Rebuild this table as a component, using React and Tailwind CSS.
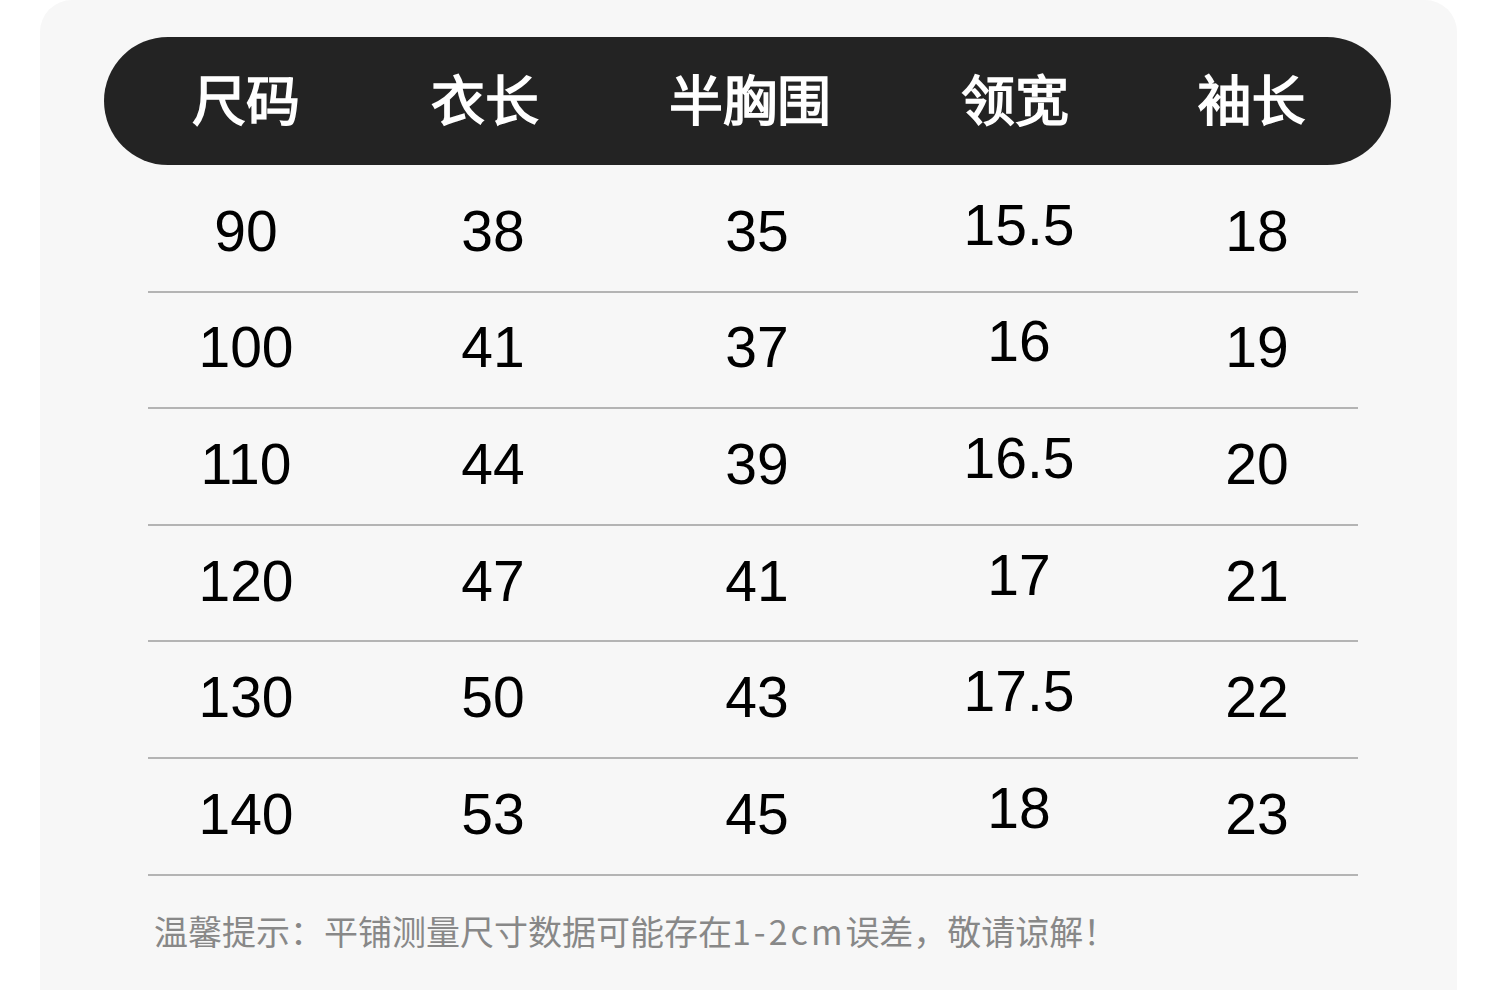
import React from "react";

const cjk = { fontFamily: '"Noto Sans CJK SC", "Noto Sans", sans-serif' };
const num = { fontFamily: '"Liberation Sans", Arial, sans-serif' };

const headers = ["尺码", "衣长", "半胸围", "领宽", "袖长"];
const rows = [
  ["90", "38", "35", "15.5", "18"],
  ["100", "41", "37", "16", "19"],
  ["110", "44", "39", "16.5", "20"],
  ["120", "47", "41", "17", "21"],
  ["130", "50", "43", "17.5", "22"],
  ["140", "53", "45", "18", "23"],
];

export default function App() {
  return (
    <div className="w-[1500px] h-[990px] bg-white overflow-hidden">
      <div className="ml-[40px] w-[1417px] h-[990px] bg-[#f7f7f7] rounded-t-[32px] pt-[37px]">
        <div
          className="ml-[64px] w-[1287px] h-[128px] rounded-full bg-[#232323] grid grid-cols-[284px_194px_336px_194px_279px] items-center text-white text-[54px] leading-none font-normal [-webkit-text-stroke:1.6px_white]"
          style={cjk}
        >
          {headers.map((h) => (
            <div key={h} className="text-center -translate-y-[3px]">
              {h}
            </div>
          ))}
        </div>
        <div className="ml-[108px] w-[1210px] mt-[11px]">
          {rows.map((r, i) => (
            <div
              key={i}
              className="h-[116.6px] border-b-2 border-[#b4b4b4] pb-[4px] grid grid-cols-[196px_298px_230px_294px_182px] items-center text-[57px] leading-none text-black"
              style={num}
            >
              {r.map((v, j) => (
                <div
                  key={j}
                  className={j === 3 ? "text-center -translate-y-[6px]" : "text-center"}
                >
                  {v}
                </div>
              ))}
            </div>
          ))}
          <div
            className="mt-[38px] ml-[6px] text-[34px] leading-[34px] text-[#888888]"
            style={cjk}
          >
            温馨提示：平铺测量尺寸数据可能存在<span className="tracking-[3px]">1-2cm</span>误差，敬请谅解！
          </div>
        </div>
      </div>
    </div>
  );
}
